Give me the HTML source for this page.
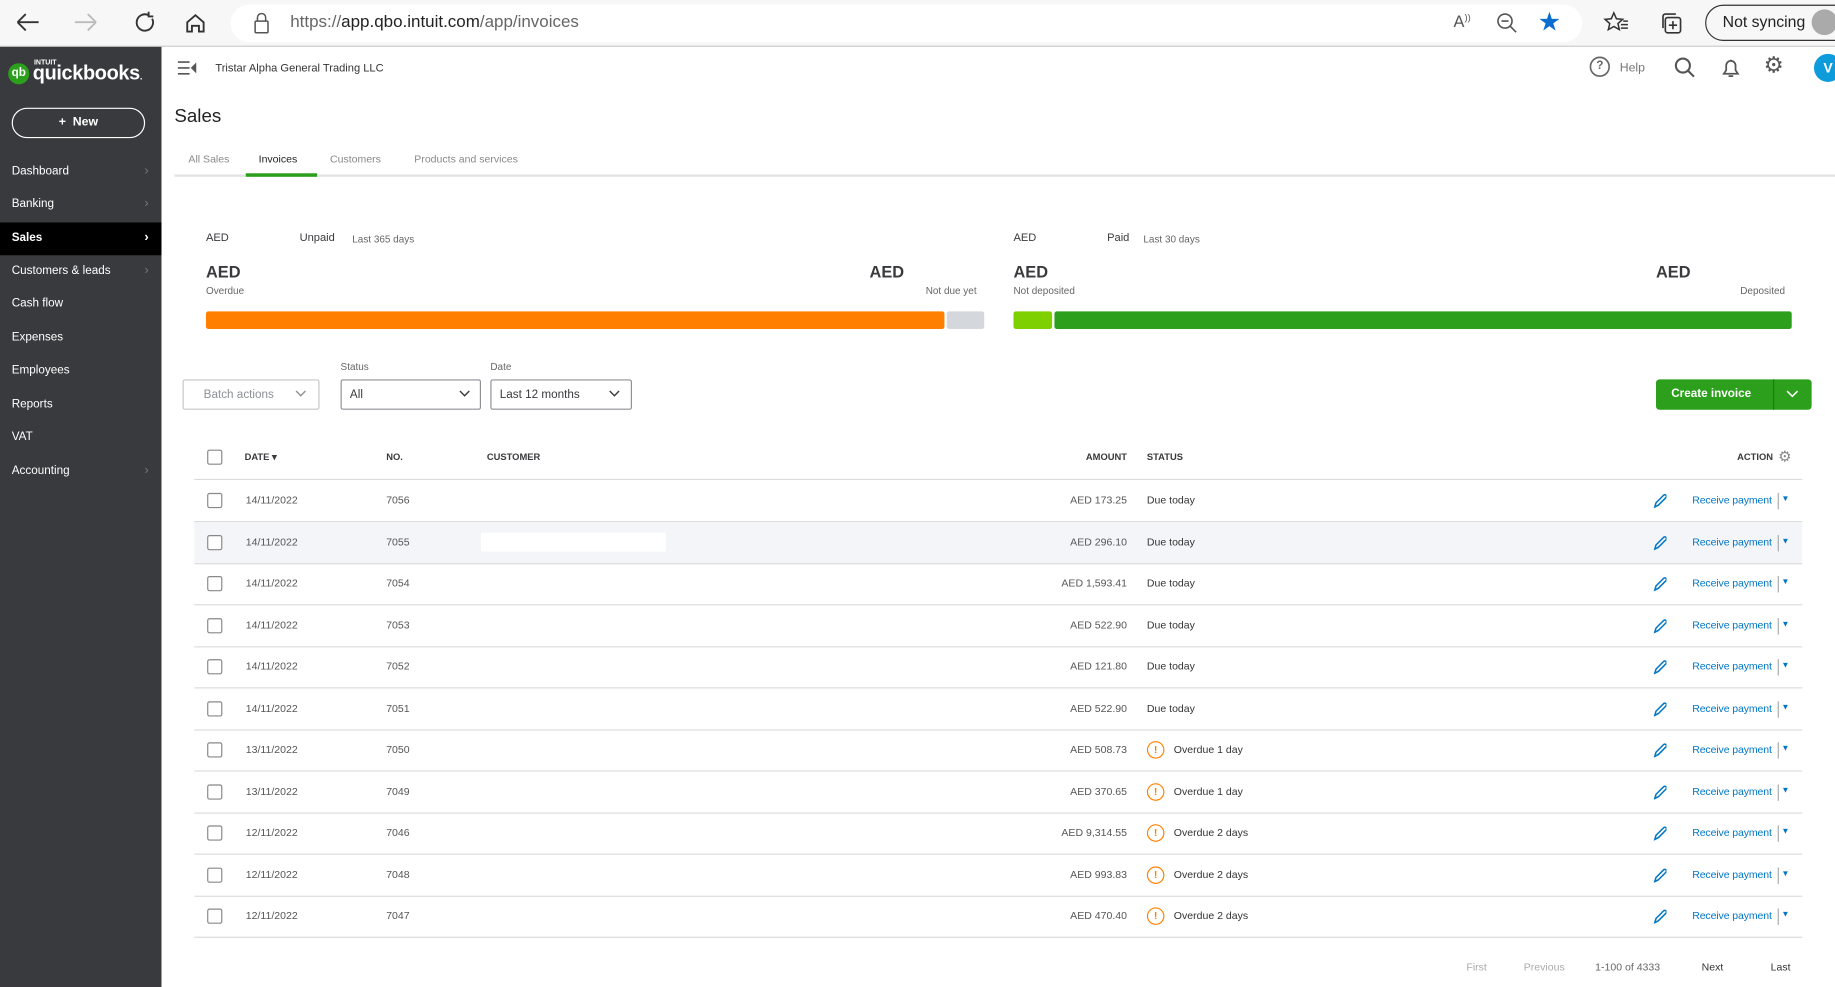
<!DOCTYPE html>
<html><head><meta charset="utf-8"><style>
*{box-sizing:border-box;margin:0;padding:0}
html,body{width:1835px;height:987px;overflow:hidden;background:#fff}
#w{position:absolute;left:0;top:0;width:1568px;height:843px;transform:scale(1.1703,1.1708);transform-origin:0 0;font-family:"Liberation Sans",sans-serif;color:#393a3d}
.a{position:absolute;white-space:nowrap}
.sb{position:absolute;left:0;top:40px;width:138px;height:803px;background:#393a3d}
.nav{position:absolute;left:0;width:138px;height:28px;color:#fff;font-size:10px;padding:8px 10px}
.nav .c{position:absolute;right:11px;top:7px;color:#777;font-size:11px}
.row{position:absolute;left:166px;width:1374px;height:36px;border-bottom:1px solid #dcdcdc;font-size:9px;color:#555}
.cb{position:absolute;left:11px;top:11px;width:13px;height:13px;border:1px solid #888;border-radius:2px;background:#fff}
.row span{position:absolute;top:12px}
.rp{color:#0077c5;letter-spacing:-0.1px}
</style></head><body><div id="w">
<div class="a" style="left:0;top:0;width:1568px;height:40px;background:#f7f7f7;border-bottom:1px solid #ccc"></div>
<svg class="a" style="left:12px;top:9px" width="170" height="22" fill="none" stroke="#333" stroke-width="1.6">
<path d="M3 10h18M3 10l7-7M3 10l7 7"/><path d="M52 10h18M70 10l-7-7M70 10l-7 7" stroke="#bbb"/>
<path d="M115 4a7 7 0 1 0 3 3M115 1v4h4"/><path d="M148 18v-8l7-6 7 6v8h-4v-5h-6v5z"/></svg>
<div class="a" style="left:197px;top:4px;width:1155px;height:32px;background:#fff;border-radius:16px"></div>
<svg class="a" style="left:216px;top:11px" width="16" height="18" fill="none" stroke="#555" stroke-width="1.3"><rect x="2" y="7" width="11" height="10" rx="1"/><path d="M4 7V4a3.5 3.5 0 0 1 7 0v3"/></svg>
<div class="a" style="left:248px;top:11px;font-size:14.5px;color:#666">https://<span style="color:#222">app.qbo.intuit.com</span>/app/invoices</div>
<div class="a" style="left:1242px;top:10px;font-size:14px;color:#555">A<sup style="font-size:8px">))</sup></div>
<svg class="a" style="left:1278px;top:10px" width="20" height="20" fill="none" stroke="#555" stroke-width="1.4"><circle cx="8" cy="8" r="6"/><path d="M5 8h6M12.5 12.5l5 5"/></svg>
<div class="a" style="left:1314px;top:6px;font-size:22px;color:#0a6ed1">★</div>
<svg class="a" style="left:1370px;top:9px" width="22" height="20" fill="none" stroke="#333" stroke-width="1.3"><path d="M9 2l2.2 5 5.3.5-4 3.6 1.2 5.2L9 13.6 4.3 16.3 5.5 11.1 1.5 7.5l5.3-.5z"/><path d="M15 12h6M15 15h6M17 9h4"/></svg>
<svg class="a" style="left:1418px;top:10px" width="20" height="20" fill="none" stroke="#333" stroke-width="1.4"><rect x="5" y="5" width="13" height="13" rx="2"/><path d="M3 14V4a2 2 0 0 1 2-2h9M11.5 8v7M8 11.5h7"/></svg>
<div class="a" style="left:1457px;top:4px;width:130px;height:31px;border:1.5px solid #333;border-radius:16px;font-size:13.5px;padding:6px 14px;color:#222">Not syncing</div>
<div class="a" style="left:1548px;top:8px;width:22px;height:22px;border-radius:50%;background:#aaa"></div>
<div class="sb"></div>
<div class="a" style="left:7px;top:54px;width:18px;height:18px;border-radius:50%;background:#2ca01c;color:#fff;font-size:10px;font-weight:bold;text-align:center;line-height:18px">qb</div>
<div class="a" style="left:29px;top:51px;color:#fff;font-size:6px;font-weight:bold">INTUIT</div>
<div class="a" style="left:28px;top:53px;color:#fff;font-size:17px;font-weight:bold;letter-spacing:-0.3px">quickbooks<span style="font-size:8px">.</span></div>
<div class="a" style="left:10px;top:92px;width:114px;height:26px;border:1.5px solid #fff;border-radius:14px;color:#fff;font-size:10.5px;text-align:center;line-height:23px;font-weight:bold">+&nbsp; New</div>
<div class="nav" style="top:133px">Dashboard<span class="c">›</span></div>
<div class="nav" style="top:161px">Banking<span class="c">›</span></div>
<div class="nav" style="top:190px;background:#000;font-weight:bold">Sales<span class="c" style="color:#fff">›</span></div>
<div class="nav" style="top:218px">Customers &amp; leads<span class="c">›</span></div>
<div class="nav" style="top:246px">Cash flow</div>
<div class="nav" style="top:275px">Expenses</div>
<div class="nav" style="top:303px">Employees</div>
<div class="nav" style="top:332px">Reports</div>
<div class="nav" style="top:360px">VAT</div>
<div class="nav" style="top:389px">Accounting<span class="c">›</span></div>
<svg class="a" style="left:151px;top:51px" width="18" height="14" fill="none" stroke="#555" stroke-width="1.4"><path d="M1 2h10M1 7h10M1 12h10"/><path d="M16 4l-3 3 3 3z" fill="#555"/></svg>
<div class="a" style="left:184px;top:53px;font-size:9.5px;color:#333">Tristar Alpha General Trading LLC</div>
<svg class="a" style="left:1358px;top:48px" width="20" height="20" fill="none" stroke="#666" stroke-width="1.4"><circle cx="9" cy="9" r="8"/></svg>
<div class="a" style="left:1364px;top:51px;font-size:10px;color:#666;font-weight:bold">?</div>
<div class="a" style="left:1384px;top:52px;font-size:10.5px;color:#777">Help</div>
<svg class="a" style="left:1430px;top:48px" width="20" height="20" fill="none" stroke="#555" stroke-width="1.8"><circle cx="8" cy="8" r="6"/><path d="M12.5 12.5l5 5"/></svg>
<svg class="a" style="left:1469px;top:48px" width="20" height="20" fill="none" stroke="#555" stroke-width="1.5"><path d="M4 15h12l-2-3V8a4 4 0 0 0-8 0v4zM8 17h4M10 3v1"/></svg>
<div class="a" style="left:1507px;top:45px;font-size:19px;color:#555">⚙</div>
<div class="a" style="left:1550px;top:46px;width:24px;height:24px;border-radius:50%;background:#0d9bdc;color:#fff;font-size:12px;font-weight:bold;line-height:24px;padding-left:8px">V</div>
<div class="a" style="left:149px;top:91px;font-size:16px;color:#222">Sales</div>
<div class="a" style="left:161px;top:131px;font-size:9px;color:#888">All Sales</div>
<div class="a" style="left:221px;top:131px;font-size:9px;color:#222">Invoices</div>
<div class="a" style="left:282px;top:131px;font-size:9px;color:#888">Customers</div>
<div class="a" style="left:354px;top:131px;font-size:9px;color:#888">Products and services</div>
<div class="a" style="left:149px;top:149px;width:1419px;height:2px;background:#e3e3e3"></div>
<div class="a" style="left:210px;top:148px;width:61px;height:3px;background:#2ca01c"></div>
<div class="a" style="left:176px;top:198px;font-size:9.5px">AED</div>
<div class="a" style="left:256px;top:198px;font-size:9.5px">Unpaid</div>
<div class="a" style="left:301px;top:199px;font-size:8.5px;color:#666">Last 365 days</div>
<div class="a" style="left:176px;top:224px;font-size:14px;font-weight:bold">AED</div>
<div class="a" style="left:176px;top:243px;font-size:8.5px;color:#666">Overdue</div>
<div class="a" style="left:743px;top:224px;font-size:14px;font-weight:bold">AED</div>
<div class="a" style="left:791px;top:243px;font-size:8.5px;color:#666">Not due yet</div>
<div class="a" style="left:176px;top:266px;width:631px;height:15px;background:#ff8000;border-radius:2px"></div>
<div class="a" style="left:809px;top:266px;width:32px;height:15px;background:#d4d7dc;border-radius:2px"></div>
<div class="a" style="left:866px;top:198px;font-size:9.5px">AED</div>
<div class="a" style="left:946px;top:198px;font-size:9.5px">Paid</div>
<div class="a" style="left:977px;top:199px;font-size:8.5px;color:#666">Last 30 days</div>
<div class="a" style="left:866px;top:224px;font-size:14px;font-weight:bold">AED</div>
<div class="a" style="left:866px;top:243px;font-size:8.5px;color:#666">Not deposited</div>
<div class="a" style="left:1415px;top:224px;font-size:14px;font-weight:bold">AED</div>
<div class="a" style="left:1487px;top:243px;font-size:8.5px;color:#666">Deposited</div>
<div class="a" style="left:866px;top:266px;width:33px;height:15px;background:#7fd000;border-radius:2px"></div>
<div class="a" style="left:901px;top:266px;width:630px;height:15px;background:#2ca01c;border-radius:2px"></div>
<div class="a" style="left:156px;top:324px;width:117px;height:26px;border:1px solid #c6c6c6;border-radius:2px;font-size:10px;color:#8d9096;padding:7px 17px">Batch actions</div>
<svg class="a" style="left:252px;top:333px" width="10" height="7" fill="none" stroke="#8d9096" stroke-width="1.2"><path d="M1 1l4 4 4-4"/></svg>
<div class="a" style="left:291px;top:308px;font-size:8.5px;color:#666">Status</div>
<div class="a" style="left:291px;top:324px;width:120px;height:26px;border:1px solid #8d9096;border-radius:2px;font-size:10px;padding:7px 7px">All</div>
<svg class="a" style="left:392px;top:333px" width="10" height="7" fill="none" stroke="#393a3d" stroke-width="1.2"><path d="M1 1l4 4 4-4"/></svg>
<div class="a" style="left:419px;top:308px;font-size:8.5px;color:#666">Date</div>
<div class="a" style="left:419px;top:324px;width:121px;height:26px;border:1px solid #8d9096;border-radius:2px;font-size:10px;padding:7px 7px">Last 12 months</div>
<svg class="a" style="left:520px;top:333px" width="10" height="7" fill="none" stroke="#393a3d" stroke-width="1.2"><path d="M1 1l4 4 4-4"/></svg>
<div class="a" style="left:1415px;top:324px;width:133px;height:26px;background:#2ca01c;border-radius:3px;color:#fff;font-size:10px;font-weight:bold;padding:7px 13px">Create invoice</div>
<div class="a" style="left:1515px;top:324px;width:1px;height:26px;background:#1e7a13"></div>
<svg class="a" style="left:1526px;top:333px" width="11" height="7" fill="none" stroke="#fff" stroke-width="1.3"><path d="M1 1l4.5 4.5L10 1"/></svg>
<div class="row" style="top:373px;height:37px;font-size:8px;font-weight:bold;color:#393a3d">
<div class="cb" style="top:11px"></div>
<span style="left:43px;top:13px">DATE ▾</span><span style="left:164px;top:13px">NO.</span><span style="left:250px;top:13px">CUSTOMER</span>
<span style="right:577px;top:13px">AMOUNT</span><span style="left:814px;top:13px">STATUS</span><span style="right:25px;top:13px">ACTION</span><span style="right:9px;top:9px;font-size:13px;color:#888;font-weight:normal">⚙</span></div>
<div id="rows"></div>
<div class="a" style="left:1253px;top:821px;font-size:9px;color:#aaa">First</div>
<div class="a" style="left:1302px;top:821px;font-size:9px;color:#aaa">Previous</div>
<div class="a" style="left:1363px;top:821px;font-size:9px;color:#666">1-100 of 4333</div>
<div class="a" style="left:1454px;top:821px;font-size:9px;color:#333">Next</div>
<div class="a" style="left:1513px;top:821px;font-size:9px;color:#333">Last</div>
</div>
<script>
var d=[["14/11/2022","7056","AED 173.25","Due today"],["14/11/2022","7055","AED 296.10","Due today"],["14/11/2022","7054","AED 1,593.41","Due today"],["14/11/2022","7053","AED 522.90","Due today"],["14/11/2022","7052","AED 121.80","Due today"],["14/11/2022","7051","AED 522.90","Due today"],["13/11/2022","7050","AED 508.73","Overdue 1 day"],["13/11/2022","7049","AED 370.65","Overdue 1 day"],["12/11/2022","7046","AED 9,314.55","Overdue 2 days"],["12/11/2022","7048","AED 993.83","Overdue 2 days"],["12/11/2022","7047","AED 470.40","Overdue 2 days"]];
var pen='<svg style="position:absolute;right:116px;top:11px" width="12" height="13" fill="none" stroke="#0077c5" stroke-width="1.3"><path d="M2 12l1-3.5L9.5 2a1.4 1.4 0 0 1 2 2L5 10.5z"/></svg>';
var h="";d.forEach(function(r,i){var t=410+i*35.5;var o=r[3].indexOf("Over")==0;
h+='<div class="row" style="top:'+t+'px;'+(i==1?'background:#f4f5f8;':'')+'"><div class="cb"></div><span style="left:44px">'+r[0]+'</span><span style="left:164px">'+r[1]+'</span>'+(i==1?'<div style="position:absolute;left:245px;top:9px;width:158px;height:16px;background:#fff"></div>':'')+'<span style="right:577px">'+r[2]+'</span>'+(o?'<div style="position:absolute;left:814px;top:10px;width:15px;height:15px;border:1.5px solid #ff8000;border-radius:50%;color:#ff8000;font-size:9px;text-align:center;line-height:12px;font-weight:bold">!</div><span style="left:837px;color:#333">'+r[3]+'</span>':'<span style="left:814px;color:#333">'+r[3]+'</span>')+pen+'<span class="rp" style="right:26px">Receive payment</span><div style="position:absolute;right:20px;top:11px;width:1px;height:14px;background:#aaa"></div><span class="rp" style="right:11px;font-size:7px;top:13px">▼</span></div>';});
document.getElementById("rows").innerHTML=h;
</script>
</body></html>
